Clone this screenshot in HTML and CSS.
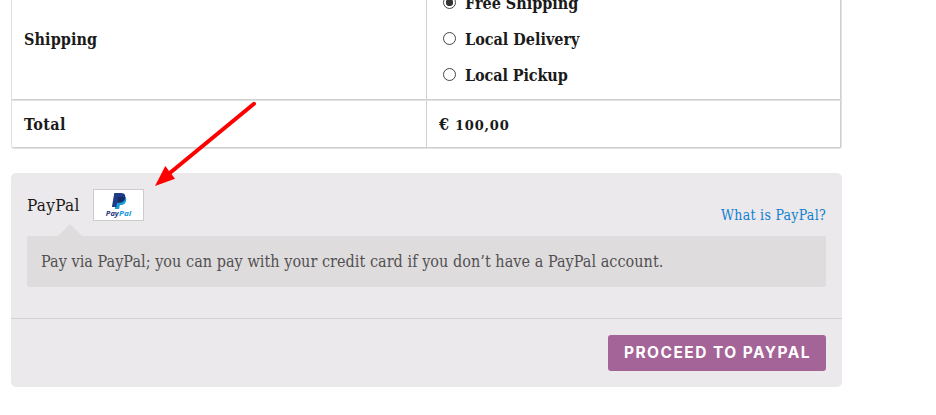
FILE: index.html
```html
<!DOCTYPE html>
<html lang="en">
<head>
<meta charset="utf-8">
<title>Checkout</title>
<link rel="stylesheet" href="styles.css">
</head>
<body>
<main class="checkout">
  <section class="totals">
    <div class="row shipping">
      <div class="cell label"><span>Shipping</span></div>
      <div class="cell options">
        <label class="option"><span class="radio checked"></span><span>Free Shipping</span></label>
        <label class="option"><span class="radio"></span><span>Local Delivery</span></label>
        <label class="option"><span class="radio"></span><span class="pickup">Local Pickup</span></label>
      </div>
    </div>
    <div class="row total">
      <div class="cell label"><span class="total-label">Total</span></div>
      <div class="cell amount"><span class="currency">€</span><span class="digits">100,00</span></div>
    </div>
  </section>
  <section class="payment">
    <div class="method">
      <div class="method-head">
        <span class="method-name">PayPal</span>
        <span class="mark">
          <svg width="49" height="30" viewBox="0 0 49 30">
            <path fill="#179bd7" d="M30.800 6.300c1.500 1 1.700 2.700 1.200 4.700-.7 2.800-2.400 4-4.900 4h-1.200l-.9 4h-4.200l.5-3 3-8z"/>
            <path fill="#1f3a86" d="M20.300 3h6.500c3.300 0 4.900 1.500 4.400 4.400-.6 3.500-2.700 5.100-6 5.100h-2l-1 4.500h-4.300z"/>
            <path fill="#172b66" d="M24 7h7.200c-.5 3.800-2.700 5.500-6 5.500h-2z"/>
            <text class="mark-text" x="11.800" y="25.500" textLength="13" lengthAdjust="spacingAndGlyphs" fill="#253b80">Pay</text>
            <text class="mark-text" x="25" y="25.500" textLength="12.300" lengthAdjust="spacingAndGlyphs" fill="#179bd7">Pal</text>
          </svg>
        </span>
        <a class="about">What is PayPal?</a>
      </div>
      <div class="description"><span>Pay via PayPal; you can pay with your credit card if you don’t have a PayPal account.</span></div>
    </div>
    <div class="place-order"><button class="button"><span>PROCEED TO PAYPAL</span></button></div>
  </section>
</main>
<svg class="arrow" width="110" height="90" viewBox="150 100 110 90">
  <path d="M254 103.800 168 174.500" stroke="#f00" stroke-width="4" stroke-linecap="round"/>
  <path d="M155 186 165.300 166 175 178.800z" fill="#f00"/>
</svg>
</body>
</html>
```
FILE: styles.css
```css
* { box-sizing: border-box; }
body {
  margin: 0;
  height: 415px;
  overflow: hidden;
  background: #fff;
  color: #1a1a1a;
  font-family: "DejaVu Serif Condensed", "DejaVu Serif", serif;
  font-stretch: condensed;
  font-size: 16px;
}
.checkout { width: 831px; margin-left: 11px; }
.totals {
  border: 1px solid #e1e1e1;
  border-top: 0;
  border-radius: 0 0 4px 4px;
  height: 149px;
  font-weight: bold;
}
.row { display: grid; grid-template-columns: 415px 414px; }
.shipping { height: 100px; border-bottom: 1px solid #d0d0d0; }
.total { height: 48px; border-top: 1px solid #e1e1e1; border-bottom: 1px solid #d0d0d0; }
.cell { display: flex; align-items: center; padding-left: 12px; border-right: 1px solid #d0d0d0; white-space: nowrap; }
.shipping .label { height: 99px; padding-bottom: 20px; letter-spacing: 0.1px; }
.total-label { letter-spacing: 0.4px; }
.options { flex-direction: column; align-items: flex-start; justify-content: flex-end; height: 99px; padding: 0 0 6px 16px; }
.option { display: flex; align-items: center; flex: none; height: 36px; }
.pickup { letter-spacing: -0.1px; }
.radio { position: relative; top: -1px; width: 13px; height: 13px; margin-right: 9px; border: 1px solid #444; border-radius: 50%; background: #fff; }
.checked { background: radial-gradient(circle, #333 0 3.4px, #fff 4px); }
.currency { width: 16px; font-stretch: normal; }
.digits { font-family: "DejaVu Serif", serif; font-stretch: normal; font-size: 13px; letter-spacing: 0.8px; padding-top: 2px; }
.payment { height: 214px; margin-top: 24px; background: #ebe9eb; border-radius: 5px; }
.method { height: 146px; padding: 16px 16px 0; border-bottom: 1px solid #d3d0d4; }
.method-head { display: flex; height: 47px; }
.method-name { width: 53px; line-height: 33px; font-size: 17px; letter-spacing: 0.3px; }
.mark { width: 51px; height: 32px; margin-left: 13px; border: 1px solid #ccc; background: #fff; }
.mark svg { display: block; }
.mark-text { font: italic bold 7.5px "Open Sans", sans-serif; }
.about { margin-left: auto; padding-top: 16px; line-height: 20px; font-size: 14px; letter-spacing: 0.28px; color: #0f7fd0; }
.description {
  position: relative;
  height: 51px;
  padding-left: 14px;
  border-radius: 2px;
  background: #dfdcde;
  color: #515151;
  line-height: 52px;
  letter-spacing: 0.05px;
  white-space: nowrap;
}
.description::before {
  content: "";
  position: absolute;
  left: 31px;
  top: -12px;
  border: 12px solid transparent;
  border-top: 0;
  border-bottom-color: #dfdcde;
}
.place-order { display: flex; justify-content: flex-end; padding: 16px 16px 0; }
.button {
  width: 218px;
  height: 36px;
  padding: 0 0 2px 1px;
  border: 0;
  border-radius: 3px;
  background: #a46497;
  color: #fff;
  font: bold 15.5px "Inter", sans-serif;
  letter-spacing: 1.45px;
  white-space: nowrap;
}
.arrow { position: absolute; left: 150px; top: 100px; }
```
